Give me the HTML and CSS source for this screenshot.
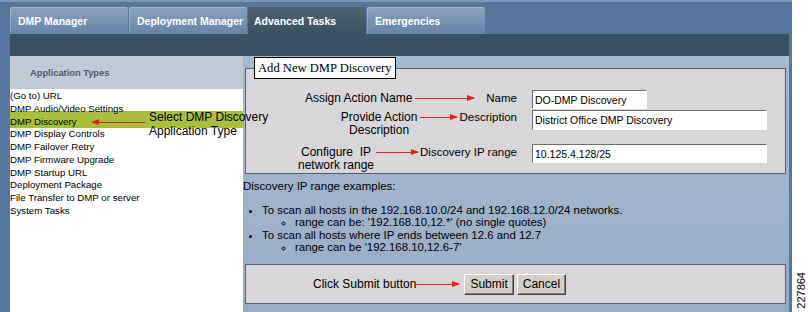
FILE: index.html
```html
<!DOCTYPE html>
<html lang="en">
<head>
    <meta charset="UTF-8">
    <title>DMP Manager - Advanced Tasks</title>
    <link rel="stylesheet" href="styles.css">
</head>
<body>

<div class="page">
    <div class="app">
        <nav class="tabs">
            <a class="tab">DMP Manager</a>
            <a class="tab">Deployment Manager</a>
            <a class="tab tab-active">Advanced Tasks</a>
            <a class="tab">Emergencies</a>
        </nav>
        <div class="band"></div>

        <div class="main">
            <aside class="types">
                <div class="types-head">Application Types</div>
                <ul class="types-list">
                    <li>(Go to) URL</li>
                    <li>DMP Audio/Video Settings</li>
                    <li class="selected">DMP Discovery</li>
                    <li>DMP Display Controls</li>
                    <li>DMP Failover Retry</li>
                    <li>DMP Firmware Upgrade</li>
                    <li>DMP Startup URL</li>
                    <li>Deployment Package</li>
                    <li>File Transfer to DMP or server</li>
                    <li>System Tasks</li>
                </ul>
                <!-- callout pointing at the selected type -->
                <div class="callout">
                    <span class="arrow arrow-left"></span>
                    <span class="callout-text">Select DMP Discovery<br>Application Type</span>
                </div>
            </aside>

            <section class="task">
                <fieldset class="form-box">
                    <legend>Add New DMP Discovery</legend>

                    <div class="row row-name">
                        <div class="lead">
                            <span class="note">Assign Action Name</span>
                            <span class="arrow arrow-name"></span>
                            <label class="label">Name</label>
                        </div>
                        <input class="field field-short" value="DO-DMP Discovery">
                    </div>

                    <div class="row row-desc">
                        <div class="lead">
                            <span class="note">Provide Action<br>Description</span>
                            <span class="arrow arrow-desc"></span>
                            <label class="label">Description</label>
                        </div>
                        <input class="field field-desc" value="District Office DMP Discovery">
                    </div>

                    <div class="row row-range">
                        <div class="lead">
                            <span class="note">Configure&nbsp; IP<br>network range</span>
                            <span class="arrow arrow-range"></span>
                            <label class="label">Discovery IP range</label>
                        </div>
                        <input class="field" value="10.125.4.128/25">
                    </div>
                </fieldset>

                <p class="examples-title">Discovery IP range examples:</p>
                <ul class="examples">
                    <li>To scan all hosts in the 192.168.10.0/24 and 192.168.12.0/24 networks.
                        <ul>
                            <li>range can be: '192.168.10,12.*' (no single quotes)</li>
                        </ul>
                    </li>
                    <li>To scan all hosts where IP ends between 12.6 and 12.7
                        <ul>
                            <li>range can be '192.168.10,12.6-7'</li>
                        </ul>
                    </li>
                </ul>

                <div class="actions">
                    <span class="note">Click Submit button</span>
                    <span class="arrow arrow-submit"></span>
                    <button class="btn">Submit</button>
                    <button class="btn">Cancel</button>
                </div>
            </section>
        </div>
    </div>

    <div class="figure-id"><span>227864</span></div>
</div>

</body>
</html>
```

FILE: styles.css
```css
body {
    margin: 0;
    font-family: "Liberation Sans", Arial, sans-serif;
    background-color: #fff;
    color: #000;
}

.page {
    display: flex;
    width: 808px;
    height: 312px;
    overflow: hidden;
}

.app {
    width: 792px;
    display: flex;
    flex-direction: column;
    background-color: #5877a0;
}

/* tab bar */
.tabs {
    display: flex;
    gap: 1px;
    height: 34px;
    box-sizing: border-box;
    padding: 5px 0 0 10px;
    border-top: 2px solid #7e97b6;
    background-color: #56769c;
}

.tab {
    width: 118px;
    box-sizing: border-box;
    padding: 0 0 0 8px;
    display: flex;
    align-items: center;
    white-space: nowrap;
    color: #fff;
    font-size: 10.5px;
    font-weight: bold;
    background: linear-gradient(#8aa4c0, #6484a9);
    border-radius: 2px 2px 0 0;
    box-shadow: inset 1px 1px 0 rgba(255, 255, 255, 0.2);
}

.tab-active {
    padding-left: 6px;
    background: linear-gradient(#4e6475, #3b5263);
    box-shadow: none;
}

.band {
    height: 22px;
    margin: 0 3px 0 10px;
    background-color: #3b5263;
}

.main {
    flex: 1;
    display: flex;
    margin: 0 3px 0 10px;
    min-height: 0;
}

/* left column */
.types {
    width: 233px;
    position: relative;
    display: flex;
    flex-direction: column;
    background-color: #fff;
}

.types-head {
    height: 33px;
    display: flex;
    align-items: center;
    padding-left: 20px;
    font-size: 9.3px;
    font-weight: bold;
    color: #4b5a6c;
    background-color: #c2cad6;
}

.types-list {
    list-style: none;
    margin: 0;
    padding: 1px 0 0;
    font-size: 9.7px;
    line-height: 12.75px;
}

.selected {
    margin-top: -5px;
    padding-top: 5px;
    background-color: #a7bf3d;
}

.callout {
    position: absolute;
    left: 82px;
    top: 54px;
    display: flex;
    align-items: flex-start;
    font-size: 12px;
    line-height: 14px;
    white-space: nowrap;
}

/* red annotation arrows */
.arrow {
    position: relative;
    flex: none;
    height: 1px;
    margin-top: 6px;
    background-color: #e3201b;
}

.arrow::after {
    content: '';
    position: absolute;
    right: -1px;
    top: -3px;
    border-left: 8px solid #e3201b;
    border-top: 3.5px solid transparent;
    border-bottom: 3.5px solid transparent;
}

.arrow-left {
    width: 53px;
    margin: 12px 4px 0 0;
}

.arrow-left::after {
    right: auto;
    left: -1px;
    border-left: none;
    border-right: 8px solid #e3201b;
}

.arrow-name {
    width: 59px;
    margin-left: 3px;
    margin-right: 12px;
}

.arrow-desc {
    width: 37px;
    margin-left: 3px;
    margin-right: 2px;
}

.arrow-range {
    width: 42px;
    margin-left: 2px;
    margin-right: 2px;
}

.arrow-submit {
    width: 43px;
    margin: 0 5px 0 0;
}

/* right column */
.task {
    flex: 1;
    display: flex;
    flex-direction: column;
    background: linear-gradient(#a9b9cf, #97adc6);
}

.form-box {
    margin: 1px 3px 0 2px;
    padding: 11px 0 1px;
    min-width: 0;
    border: 1px solid #56616f;
    background-color: #d8d6d9;
}

.form-box legend {
    margin-left: 8px;
    padding: 2px 3px;
    border: 1px solid #000;
    background-color: #fff;
    font-family: "Liberation Serif", "Times New Roman", serif;
    font-size: 12.6px;
    line-height: 16px;
}

.row {
    display: grid;
    grid-template-columns: 286px 235px;
    align-items: start;
}

.lead {
    display: flex;
    justify-content: flex-end;
    align-items: flex-start;
    padding-right: 15px;
}

.row-name .lead {
    padding-top: 1.5px;
}

.row-desc {
    margin-top: 1px;
}

.row-desc .lead {
    padding-top: 1px;
}

.row-range {
    margin-top: 7px;
}

.row-range .lead {
    padding-top: 1.5px;
}

.note {
    font-size: 12px;
    line-height: 13px;
    text-align: center;
    white-space: nowrap;
}

.label {
    font-size: 11.5px;
    line-height: 13px;
    white-space: nowrap;
}

.field {
    width: 235px;
    height: 19px;
    box-sizing: border-box;
    margin: 0;
    padding: 0 2px;
    border: 1px solid;
    border-color: #6d6d6d #fff #fff #6d6d6d;
    background-color: #fff;
    font-family: "Liberation Sans", Arial, sans-serif;
    font-size: 10.5px;
    color: #000;
}

.field-short {
    width: 115px;
}

.field-desc {
    height: 20px;
}

.examples-title {
    margin: 6px 0 0;
    font-size: 11.5px;
    line-height: 13px;
}

.examples {
    margin: 11px 0 0;
    padding-left: 19px;
    font-size: 11.4px;
    line-height: 12.6px;
}

.examples ul {
    margin: 0;
    padding-left: 33px;
    list-style: circle;
}

.actions {
    margin: auto 3px 8px 2px;
    height: 40px;
    box-sizing: border-box;
    display: flex;
    align-items: center;
    padding-left: 67px;
    border: 1px solid #56616f;
    background-color: #d8d6d9;
}

.btn {
    height: 21px;
    margin-right: 3px;
    padding: 0 5px;
    border: 1px solid;
    border-color: #fff #404040 #404040 #fff;
    box-shadow: inset -1px -1px 0 #808080;
    background-color: #d4d0c8;
    font-family: "Liberation Sans", Arial, sans-serif;
    font-size: 12px;
    color: #000;
}

/* figure number in the margin */
.figure-id {
    flex: 1;
    display: flex;
    align-items: flex-end;
    justify-content: center;
    padding: 0 0 3px 2px;
}

.figure-id span {
    writing-mode: vertical-rl;
    transform: rotate(180deg);
    font-size: 11px;
    line-height: 11px;
}
```
